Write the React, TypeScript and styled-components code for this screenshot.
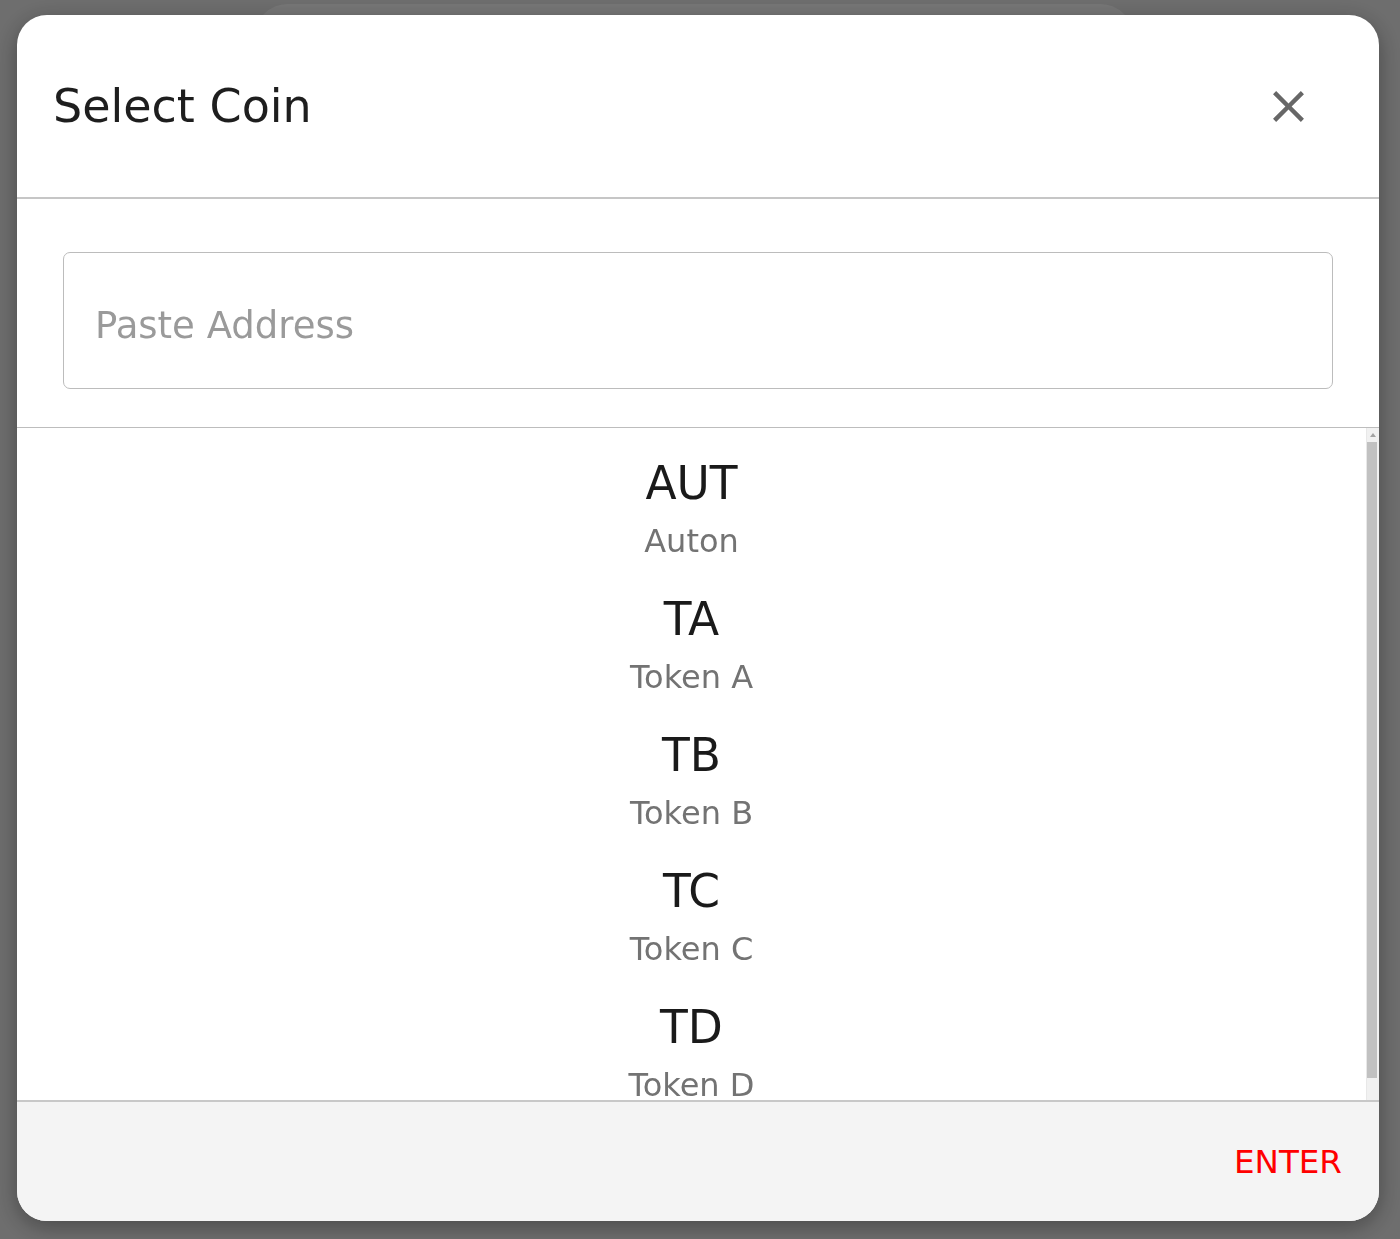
import styled, { createGlobalStyle } from 'styled-components';

const coins = [
  { symbol: 'AUT', name: 'Auton' },
  { symbol: 'TA', name: 'Token A' },
  { symbol: 'TB', name: 'Token B' },
  { symbol: 'TC', name: 'Token C' },
  { symbol: 'TD', name: 'Token D' },
];

const GlobalStyle = createGlobalStyle`
  html, body {
    margin: 0;
    padding: 0;
    background: #ececec;
    font-family: "DejaVu Sans", "Liberation Sans", sans-serif;
    overflow: hidden;
  }
  * {
    box-sizing: border-box;
  }
`;

const CloseIcon = () => (
  <svg width="53" height="53" viewBox="0 0 24 24" fill="#676767">
    <path d="M19 6.41L17.59 5 12 10.59 6.41 5 5 6.41 10.59 12 5 17.59 6.41 19 12 13.41 17.59 19 19 17.59 13.41 12z" />
  </svg>
);

export default function App() {
  return (
    <>
      <GlobalStyle />
      <Page>
        <BackCard />
      </Page>
      <Overlay>
        <Modal>
          <Header>
            <Title>Select Coin</Title>
            <CloseButton aria-label="close">
              <CloseIcon />
            </CloseButton>
          </Header>
          <SearchSection>
            <AddressInput placeholder="Paste Address" />
          </SearchSection>
          <ListArea>
            <CoinList>
              {coins.map((coin) => (
                <CoinItem key={coin.symbol}>
                  <CoinSymbol>{coin.symbol}</CoinSymbol>
                  <CoinName>{coin.name}</CoinName>
                </CoinItem>
              ))}
            </CoinList>
            <ScrollTrack>
              <ScrollUp>
                <UpArrow />
              </ScrollUp>
              <ScrollThumb />
            </ScrollTrack>
          </ListArea>
          <Footer>
            <EnterButton>ENTER</EnterButton>
          </Footer>
        </Modal>
      </Overlay>
    </>
  );
}

const Page = styled.div`
  width: 100%;
  height: 1239px;
  display: flex;
  justify-content: center;
  padding-top: 4px;
`;

const BackCard = styled.div`
  width: 880px;
  margin-left: -12px;
  height: 1200px;
  background: #ffffff;
  border-radius: 34px;
`;

const Overlay = styled.div`
  position: fixed;
  inset: 0;
  background: rgba(0, 0, 0, 0.535);
  padding: 15px 21px 18px 17px;
  display: flex;
`;

const Modal = styled.div`
  flex: 1;
  display: flex;
  flex-direction: column;
  background: #ffffff;
  border-radius: 30px;
  overflow: hidden;
  box-shadow: 0 6px 24px rgba(0, 0, 0, 0.35);
`;

const Header = styled.div`
  height: 184px;
  flex-shrink: 0;
  display: flex;
  align-items: center;
  justify-content: space-between;
  padding: 0 64px 0 36px;
  border-bottom: 2px solid #c6c6c6;
`;

const Title = styled.h2`
  margin: 0;
  font-size: 46px;
  font-weight: 400;
  color: #1e1e1e;
`;

const CloseButton = styled.button`
  border: none;
  background: none;
  padding: 0;
  display: flex;
  cursor: pointer;
`;

const SearchSection = styled.div`
  flex-shrink: 0;
  padding: 53px 46px 38px;
  border-bottom: 1px solid #bdbdbd;
`;

const AddressInput = styled.input`
  display: block;
  width: 100%;
  height: 137px;
  padding: 10px 31px 0;
  border: 1px solid #bcbcbc;
  border-radius: 7px;
  font-family: "DejaVu Sans", "Liberation Sans", sans-serif;
  font-size: 37px;
  color: #222;
  outline: none;

  &::placeholder {
    color: #9a9a9a;
  }
`;

const ListArea = styled.div`
  flex: 1;
  min-height: 0;
  display: flex;
`;

const CoinList = styled.div`
  flex: 1;
  overflow: hidden;
`;

const CoinItem = styled.div`
  display: flex;
  flex-direction: column;
  align-items: center;
  padding: 30px 0 5px;
  cursor: pointer;
`;

const CoinSymbol = styled.div`
  font-size: 45.5px;
  line-height: 52px;
  color: #1a1a1a;
  margin-bottom: 13px;
`;

const CoinName = styled.div`
  font-size: 32px;
  line-height: 36px;
  color: #737373;
`;

const ScrollTrack = styled.div`
  width: 13px;
  flex-shrink: 0;
  display: flex;
  flex-direction: column;
  background: #f1f1f1;
  border-left: 1px solid #e8e8e8;
`;

const ScrollUp = styled.div`
  height: 14px;
  display: flex;
  align-items: center;
  justify-content: center;
  padding-right: 1px;
`;

const UpArrow = styled.div`
  width: 0;
  height: 0;
  border-left: 3.5px solid transparent;
  border-right: 3.5px solid transparent;
  border-bottom: 4px solid #a3a3a3;
`;

const ScrollThumb = styled.div`
  height: 636px;
  margin-right: 2px;
  background: #c1c1c1;
`;

const Footer = styled.div`
  height: 121px;
  flex-shrink: 0;
  display: flex;
  align-items: center;
  justify-content: flex-end;
  padding-right: 37px;
  background: #f4f4f4;
  border-top: 2px solid #c8c8c8;
`;

const EnterButton = styled.button`
  border: none;
  background: none;
  padding: 0;
  font-family: "DejaVu Sans", "Liberation Sans", sans-serif;
  font-size: 32.6px;
  color: #ff0000;
  cursor: pointer;
`;
